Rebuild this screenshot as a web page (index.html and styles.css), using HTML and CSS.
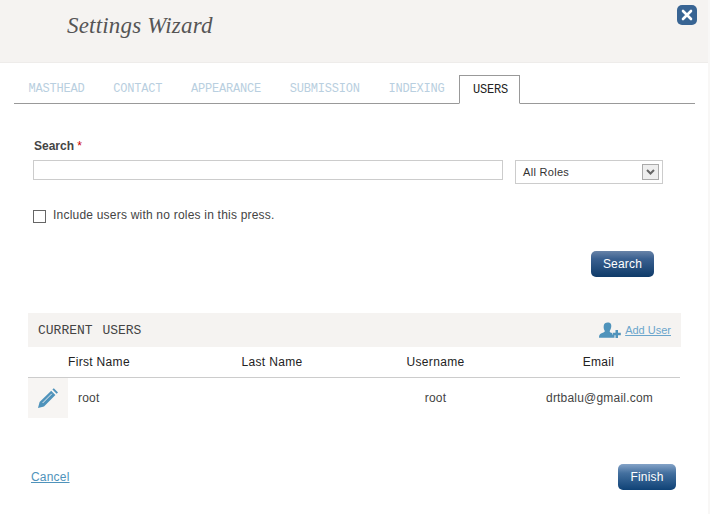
FILE: index.html
```html
<!DOCTYPE html>
<html lang="en">
<head>
<meta charset="utf-8">
<title>Settings Wizard</title>
<link rel="stylesheet" href="styles.css">
</head>
<body>
<div class="modal">
  <header class="modal-header">
    <h1 class="title">Settings Wizard</h1>
    <a class="close" href="#" aria-label="Close">
      <svg width="12" height="12" viewBox="0 0 12 12"><path d="M2 2l8 8M10 2l-8 8" stroke="#fff" stroke-width="2.6" stroke-linecap="round" fill="none"/></svg>
    </a>
  </header>
  <nav class="tabs">
    <a class="tab" href="#">MASTHEAD</a>
    <a class="tab" href="#">CONTACT</a>
    <a class="tab" href="#">APPEARANCE</a>
    <a class="tab" href="#">SUBMISSION</a>
    <a class="tab" href="#">INDEXING</a>
    <a class="tab active" href="#">USERS</a>
  </nav>
  <form class="search">
    <label class="label">Search <span class="req">*</span></label>
    <div class="fields">
      <div class="input"></div>
      <div class="select">
        <span>All Roles</span>
        <span class="arrow"><svg width="9" height="6" viewBox="0 0 9 6"><path d="M1 1l3.500 3.500L8 1" stroke="#666" stroke-width="2" fill="none"/></svg></span>
      </div>
    </div>
    <div class="check-row">
      <span class="checkbox"></span>
      <span class="check-text">Include users with no roles in this press.</span>
    </div>
    <div class="search-actions">
      <a class="btn btn-search" href="#">Search</a>
    </div>
  </form>
  <section class="users">
    <div class="users-head">
      <h2 class="users-title">CURRENT USERS</h2>
      <a class="add" href="#">
        <svg width="22" height="17" viewBox="0 0 22 17"><path fill="#4f93bb" d="M6 1.200C7.600.2 10.800.2 11.800 1.800c.8 1.300.6 3.600-.2 5.400-.4.900-.9 1.500-.9 2.200 0 .8 1.200 1.200 2.300 1.700v1.400h2.500v3.300H0c0-2.500.5-3.600 2.500-4.500 2-.9 3.300-1.200 3.300-2.100 0-.6-.6-1.200-.9-2.200C4.400 5 4.600 2.200 6 1.200z"/><path fill="#4f93bb" d="M16.500 8H19v2.800h2.800v2.500H19V16h-2.500v-2.700h-2.800v-2.500h2.800z"/></svg>
        <span class="add-text">Add User</span>
      </a>
    </div>
    <div class="row head-row">
      <div class="cell first">First Name</div>
      <div class="cell">Last Name</div>
      <div class="cell">Username</div>
      <div class="cell">Email</div>
    </div>
    <div class="row body-row">
      <a class="edit" href="#" aria-label="Edit">
        <svg width="22" height="22" viewBox="0 0 22 22"><path fill="#4f93bb" d="M16.800 1.200l4.200 4.200-1.400 1.400-4.200-4.200zM14.200 3.800l4.200 4.200L7 19.400 1 21l1.600-6z"/><path fill="none" stroke="#f7f5f3" stroke-width=".9" d="M14.800 6.800L5.600 16"/></svg>
      </a>
      <div class="cell first-val">root</div>
      <div class="cell"></div>
      <div class="cell">root</div>
      <div class="cell email">drtbalu@gmail.com</div>
    </div>
  </section>
  <footer class="footer">
    <a class="cancel" href="#">Cancel</a>
    <a class="btn btn-finish" href="#">Finish</a>
  </footer>
</div>
</body>
</html>
```
FILE: styles.css
```css
* { box-sizing: border-box; }
html, body { margin: 0; padding: 0; background: #fff; }
body { font-family: "Liberation Sans", Arial, sans-serif; font-size: 12px; letter-spacing: .2px; color: #333; }
a { text-decoration: none; }

.modal { position: relative; width: 710px; height: 514px; border-right: 2px solid #f8f7f6; overflow: hidden; }

.modal-header { height: 63px; margin-right: -2px; background: #f5f3f1; border-bottom: 1px solid #eeecea; padding: 13px 0 0 67px; }
.title { margin: 0; font: italic 400 23px/26px "Liberation Serif", serif; letter-spacing: .18px; color: #555; }
.close { position: absolute; left: 677px; top: 5px; width: 20px; height: 20px; border-radius: 5px; background: #386493; display: flex; align-items: center; justify-content: center; }

.tabs { display: flex; margin: 12px 0 0 14px; width: 681px; height: 29px; border-bottom: 1px solid #999; }
.tab { height: 29px; padding: 7px 14.400px 0; font: 12px/15px "Liberation Mono", monospace; letter-spacing: -.2px; color: #b9cfe0; }
.tab.active { padding: 7px 11px 0 13px; background: #fff; border: 1px solid #999; border-bottom: 1px solid #fff; color: #222; }

.search { padding: 35px 0 0 33px; }
.label { display: block; margin-left: 1px; font-weight: 700; line-height: 15px; letter-spacing: 0; color: #444; }
.req { color: #c00; font-weight: 400; }
.fields { display: flex; gap: 12px; margin-top: 6px; align-items: flex-start; }
.input { width: 470px; height: 20px; border: 1px solid #ccc; background: #fff; }
.select { width: 148px; height: 24px; border: 1px solid #ccc; padding: 0 3px 0 7px; display: flex; align-items: center; justify-content: space-between; font-size: 11px; letter-spacing: .3px; color: #333; }
.arrow { width: 17px; height: 16px; border: 1px solid #aaa; background: #eee; display: flex; align-items: center; justify-content: center; }

.check-row { display: flex; align-items: flex-start; margin-top: 26px; }
.checkbox { width: 13px; height: 13px; border: 1px solid #666; background: #fff; }
.check-text { margin: -2px 0 0 7px; line-height: 15px; letter-spacing: .21px; color: #444; }

.search-actions { display: flex; justify-content: flex-end; margin: 28px 54px 0 0; }
.btn { display: flex; align-items: center; justify-content: center; height: 26px; border-radius: 5px; color: #fff; font-size: 12px; }
.btn-search { width: 63px; background: linear-gradient(#6883a8, #3a6090 30%, #0f3b69); }
.btn-finish { width: 58px; background: linear-gradient(#84a3c8, #44709f 35%, #0f4276); }

.users { margin: 36px 0 0 28px; width: 653px; }
.users-head { height: 34px; background: #f5f3f1; display: flex; align-items: center; justify-content: space-between; padding: 0 10px; }
.users-title { margin: 0; font: 400 13px/15px "Liberation Mono", monospace; word-spacing: 2px; letter-spacing: 0; color: #444; }
.add { display: flex; align-items: center; gap: 4px; }
.add-text { font-size: 11px; letter-spacing: 0; color: #6aa5cc; text-decoration: underline; }

.row { display: grid; width: 652px; }
.head-row { height: 31px; border-bottom: 1px solid #ccc; align-items: center; color: #222; letter-spacing: .32px; padding-left: 40px; grid-template-columns: 122px 164px 163px 163px; }
.body-row { height: 40px; align-items: center; color: #444; grid-template-columns: 40px 122px 164px 163px 163px; }
.cell { text-align: center; }
.first { text-align: left; }
.first-val { text-align: left; padding-left: 10px; }
.email { padding-left: 2px; }
.edit { height: 40px; background: #f7f5f3; display: flex; align-items: center; justify-content: center; }

.footer { display: flex; align-items: center; justify-content: space-between; margin: 46px 0 0 31px; width: 645px; }
.cancel { color: #4f93bb; text-decoration: underline; }
```
